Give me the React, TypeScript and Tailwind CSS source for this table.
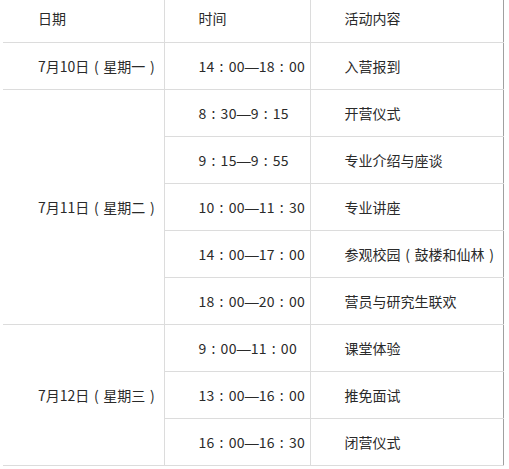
import React from "react";

type Row = { time: string; activity: string };
type Day = { date: string; rows: Row[] };

const days: Day[] = [
  { date: "7月10日（星期一）", rows: [{ time: "14：00—18：00", activity: "入营报到" }] },
  {
    date: "7月11日（星期二）",
    rows: [
      { time: "8：30—9：15", activity: "开营仪式" },
      { time: "9：15—9：55", activity: "专业介绍与座谈" },
      { time: "10：00—11：30", activity: "专业讲座" },
      { time: "14：00—17：00", activity: "参观校园（鼓楼和仙林）" },
      { time: "18：00—20：00", activity: "营员与研究生联欢" },
    ],
  },
  {
    date: "7月12日（星期三）",
    rows: [
      { time: "9：00—11：00", activity: "课堂体验" },
      { time: "13：00—16：00", activity: "推免面试" },
      { time: "16：00—16：30", activity: "闭营仪式" },
    ],
  },
];

const marks: Record<string, string> = { "：": ":", "（": "(", "）": ")", "—": "—" };

// centred full-width punctuation, as in the screenshot
function Txt({ s }: { s: string }) {
  return (
    <>
      {s.split(/([：（）—])/).map((p, i) =>
        marks[p] ? (
          <span
            key={i}
            className="inline-block w-[14px] text-center"
            style={p === "—" ? { fontFamily: '"Liberation Sans", sans-serif' } : undefined}
          >
            {marks[p]}
          </span>
        ) : (
          <span key={i}>{p}</span>
        )
      )}
    </>
  );
}

const cell = "h-[47px] border border-[#dcdcdc] pl-[34px] pt-[2px] text-left align-middle whitespace-nowrap";

export default function App() {
  return (
    <div
      className="min-h-[469px] w-[509px] overflow-hidden bg-white text-[14px] text-[#2a2a2a]"
      style={{ fontFamily: '"Noto Sans CJK SC", "Liberation Sans", sans-serif' }}
    >
      <table className="ml-[3px] w-[501px] table-fixed border-collapse border-b border-r border-b-[#a0a0a0] border-r-[#a0a0a0]">
        <colgroup>
          <col className="w-[161px]" />
          <col className="w-[146px]" />
          <col />
        </colgroup>
        <thead>
          <tr>
            <th className="h-[42px] border-x border-b border-[#dcdcdc] border-l-0 pb-[4px] pl-[35px] text-left align-middle font-normal">
              日期
            </th>
            <th className="h-[42px] border-x border-b border-[#dcdcdc] pb-[4px] pl-[34px] text-left align-middle font-normal">
              时间
            </th>
            <th className="h-[42px] border-b border-l border-[#dcdcdc] border-r-[#a0a0a0] pb-[4px] pl-[34px] text-left align-middle font-normal">
              活动内容
            </th>
          </tr>
        </thead>
        <tbody>
          {days.map((day) =>
            day.rows.map((row, i) => (
              <tr key={day.date + row.time}>
                {i === 0 && (
                  <td rowSpan={day.rows.length} className={cell + " border-l-0 pl-[35px]"}>
                    <Txt s={day.date} />
                  </td>
                )}
                <td className={cell + " tracking-[0.3px]"}>
                  <Txt s={row.time} />
                </td>
                <td className={cell + " border-r-[#a0a0a0]"}>
                  <Txt s={row.activity} />
                </td>
              </tr>
            ))
          )}
        </tbody>
      </table>
    </div>
  );
}
